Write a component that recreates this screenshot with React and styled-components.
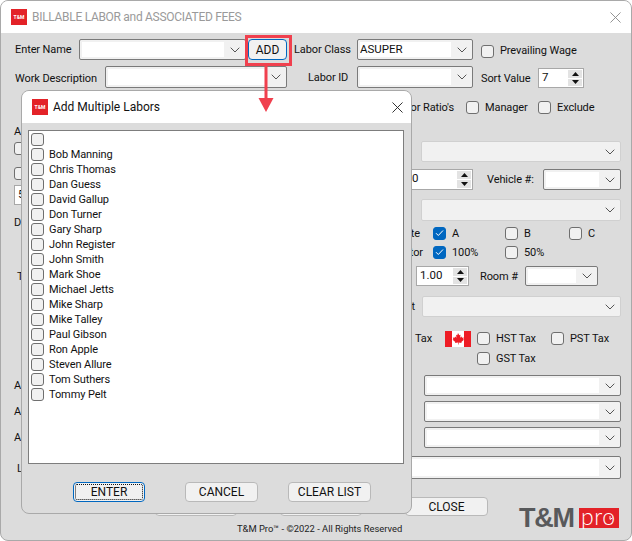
import React from "react";
import styled, { createGlobalStyle } from "styled-components";

const Global = createGlobalStyle`
  html, body { margin: 0; padding: 0; background: #fff; }
  * { box-sizing: border-box; }
  body { font-family: Roboto, "Liberation Sans", Arial, sans-serif; font-size: 11px; letter-spacing: -0.1px; color: #111; }
`;

const Win = styled.div`
  position: relative; width: 632px; height: 541px; overflow: hidden;
  background: #dcdcdc; border: 1px solid #a9a9a9; border-radius: 8px;
`;
const TitleBar = styled.div`
  display: flex; align-items: center; height: ${p => p.$h}px; background: #fff;
  padding: 0 ${p => p.$pr}px 0 ${p => p.$pl}px; flex: none;
`;
const TitleText = styled.div`
  flex: 1; margin-left: ${p => p.$ml}px; color: ${p => p.$color}; font-size: 12px; white-space: nowrap;
  letter-spacing: ${p => p.$ls || 0}px;
`;
const Badge = styled.div`
  width: 16px; height: 16px; background: #e32228; color: #fff; font-size: 5px; font-weight: 700; letter-spacing: 0;
  display: flex; align-items: center; justify-content: center; flex: none;
`;
const Row = styled.div`
  display: flex; align-items: center; height: ${p => p.$h}px; margin-top: ${p => p.$mt || 0}px;
  padding-left: ${p => p.$pl || 0}px; flex: none;
`;
const Label = styled.span`
  display: block; white-space: nowrap; margin-left: ${p => p.$ml || 0}px; margin-top: ${p => p.$mt || 0}px;
  ${p => p.$w ? `width:${p.$w}px; flex:none;` : ""}
  ${p => p.$right ? "text-align:right;" : ""}
  ${p => p.$color ? `color:${p.$color};` : ""}
`;
const ComboBox = styled.div`
  display: flex; align-items: stretch; flex: none; width: ${p => p.$w}px; height: 100%;
  margin-left: ${p => p.$ml || 0}px; padding: 2px 0 2px 2px; border-radius: 2px;
  background: #f1f1f1; border: 1px solid ${p => p.$off ? "#d0d0d0" : "#7a7a7a"};
`;
const ComboField = styled.div`
  flex: 1; background: ${p => p.$off ? "#f1f1f1" : "#fff"}; line-height: 15px; overflow: hidden; font-size: 11.5px; letter-spacing: 0;
`;
const ComboArrow = styled.div`
  width: 21px; flex: none; display: flex; align-items: center; justify-content: center;
`;
const Chevron = () => (
  <svg width="10" height="6" viewBox="0 0 10 6"><path d="M.7.7 5 5 9.3.7" fill="none" stroke="#555" strokeWidth="1" /></svg>
);
const Combo = ({ w, ml, off, children }) => (
  <ComboBox $w={w} $ml={ml} $off={off}>
    <ComboField $off={off}>{children}</ComboField>
    <ComboArrow><Chevron /></ComboArrow>
  </ComboBox>
);
const Box = styled.span`
  display: flex; align-items: center; justify-content: center; flex: none; width: 13px; height: 13px;
  margin-left: ${p => p.$ml || 0}px; margin-top: ${p => p.$mt || 0}px; border-radius: 3px;
  background: ${p => p.$on ? "#0067c0" : "#f1f1f1"}; border: 1px solid ${p => p.$on ? "#0067c0" : "#6f6f6f"};
`;
const Check = ({ on, ml, mt }) => (
  <Box $on={on} $ml={ml} $mt={mt}>
    {on && <svg width="9" height="8" viewBox="0 0 9 8"><path d="M1 4.2 3.3 6.5 8 1.5" fill="none" stroke="#fff" strokeWidth="1" /></svg>}
  </Box>
);
const SpinBox = styled.div`
  display: flex; flex: none; width: ${p => p.$w}px; height: ${p => p.$h ? `${p.$h}px` : "100%"}; margin-left: ${p => p.$ml || 0}px; margin-top: ${p => p.$mt || 0}px;
  background: #fff; border: 1px solid #a8a8a8; padding: 1px 1px 1px 2px;
`;
const SpinValue = styled.div`
  flex: 1; padding-left: ${p => p.$pl || 0}px; line-height: 15px; font-size: 11.5px; letter-spacing: 0;
`;
const SpinCol = styled.div`
  width: 14px; flex: none; display: flex; flex-direction: column; gap: 1px; background: #fff;
`;
const SpinBtn = styled.div`
  flex: 1; background: #e3e3e3; display: flex; align-items: center; justify-content: center;
`;
const Spin = ({ w, ml, pl, h, mt, children }) => (
  <SpinBox $w={w} $ml={ml} $h={h} $mt={mt}>
    <SpinValue $pl={pl}>{children}</SpinValue>
    <SpinCol>
      <SpinBtn><svg width="7" height="4" viewBox="0 0 7 4"><path d="M3.5 0 7 4H0z" fill="#111" /></svg></SpinBtn>
      <SpinBtn><svg width="7" height="4" viewBox="0 0 7 4"><path d="M0 0h7L3.5 4z" fill="#111" /></svg></SpinBtn>
    </SpinCol>
  </SpinBox>
);
const Btn = styled.button`
  flex: none; width: ${p => p.$w}px; height: ${p => p.$h}px; margin-left: ${p => p.$ml || 0}px;
  padding: 0; font: 12px Roboto, "Liberation Sans", Arial, sans-serif; color: #111;
  background: #f1f1f1; border: 1px solid ${p => p.$focus ? "#0067c0" : "#b9b9b9"}; border-radius: 4px;
  ${p => p.$dotted ? "outline: 1px dotted #111; outline-offset: -3px;" : ""}
`;
const Form = styled.div`
  padding-top: 6px;
`;
const Lower = styled.div`
  display: flex; height: 363px;
`;
const LeftCol = styled.div`
  width: 394px; flex: none; display: flex; flex-direction: column; padding-left: 13px;
`;
const RightCol = styled.div`
  flex: 1; display: flex; flex-direction: column;
`;
const Bottom = styled.div`
  display: flex; margin-top: 18px;
`;
const BottomLeft = styled.div`
  width: 518px; flex: none;
`;
const Copy = styled.div`
  margin-left: 236px; margin-top: 7px; font-size: 9.4px; letter-spacing: 0; line-height: 12px; white-space: nowrap; color: #222;
`;
const Logo = styled.div`
  display: flex; align-items: stretch; height: 20px; margin-top: 11px;
`;
const LogoText = styled.span`
  font-family: "Liberation Sans", Arial, sans-serif;
  font-size: 27px; line-height: 20px; font-weight: 700; color: #58595b; letter-spacing: -1.2px; width: 60px; white-space: nowrap;
`;
const LogoPro = styled.div`
  position: relative; width: 40px; background: #e32228; color: #fff; padding-left: 2px;
  font-size: 23px; font-weight: 300; line-height: 16px; font-family: "Lato", sans-serif; letter-spacing: 0.6px;
`;
const ClockHands = styled.svg`
  position: absolute; right: 5px; top: 7px;
`;
const Flag = styled.div`
  width: 26px; height: 16px; flex: none; margin-left: ${p => p.$ml}px;
`;

const Dialog = styled.div`
  position: absolute; left: 20px; top: 89px; width: 391px; height: 424px; display: flex; flex-direction: column;
  background: #dcdcdc; border: 1px solid #a9a9a9; border-radius: 8px; overflow: hidden;
`;
const ListBox = styled.div`
  margin: 7px 0 0 6px; width: 376px; height: 334px; background: #fff; border: 1px solid #7d7d7d;
  padding: 1px 0 0 2px; flex: none;
`;
const ListItem = styled.div`
  display: flex; align-items: center; height: 15px;
`;
const ListName = styled.span`
  margin-left: 5px; white-space: nowrap;
`;
const DialogButtons = styled.div`
  display: flex; margin-top: 18px;
`;
const Marker = styled.svg`
  position: absolute; left: 240px; top: 30px; pointer-events: none;
`;

const names = ["", "Bob Manning", "Chris Thomas", "Dan Guess", "David Gallup", "Don Turner", "Gary Sharp", "John Register", "John Smith", "Mark Shoe", "Michael Jetts", "Mike Sharp", "Mike Talley", "Paul Gibson", "Ron Apple", "Steven Allure", "Tom Suthers", "Tommy Pelt"];

const CloseX = ({ color, size }) => (
  <svg width={size} height={size} viewBox="0 0 12 12"><path d="M.5.5l11 11M11.5.5l-11 11" stroke={color} strokeWidth="1" fill="none" /></svg>
);

export default function App() {
  return (
    <>
      <Global />
      <Win>
        <TitleBar $h={32} $pl={10} $pr={10}>
          <Badge>T&amp;M</Badge>
          <TitleText $ml={5} $color="#9a9a9a" $ls={-0.3}>BILLABLE LABOR and ASSOCIATED FEES</TitleText>
          <CloseX color="#8a8a8a" size={11} />
        </TitleBar>
        <Form>
          <Row $h={21} $pl={14}>
            <Label $w={64}>Enter Name</Label>
            <Combo w={167} />
            <Btn $w={39} $h={21} $ml={2} $focus>ADD</Btn>
            <Label $w={63} $ml={7}>Labor Class</Label>
            <Combo w={116}>ASUPER</Combo>
            <Check ml={8} mt={4} />
            <Label $ml={6} $mt={2}>Prevailing Wage</Label>
          </Row>
          <Row $h={22} $mt={6} $pl={14}>
            <Label $w={90} $mt={2}>Work Description</Label>
            <Combo w={182} />
            <Label $w={49} $ml={21}>Labor ID</Label>
            <Combo w={116} />
            <Label $w={57} $ml={8} $mt={2}>Sort Value</Label>
            <Spin w={46} pl={1} h={20} mt={2}>7</Spin>
          </Row>
          <Row $h={18} $mt={10}>
            <Label $w={453} $right>Labor Ratio's</Label>
            <Check ml={12} />
            <Label $w={53} $ml={6}>Manager</Label>
            <Check />
            <Label $ml={6}>Exclude</Label>
          </Row>
          <Lower>
            <LeftCol>
              <Row $h={14} $mt={8}><Label>A</Label></Row>
              <Row $h={13} $mt={4}><Check /></Row>
              <Row $h={13} $mt={12}><Check /></Row>
              <Row $h={20} $mt={5}><Spin w={60} pl={1}>5</Spin></Row>
              <Row $h={14} $mt={10}><Label>D</Label></Row>
              <Row $h={14} $mt={40} $pl={3}><Label>T</Label></Row>
              <Row $h={14} $mt={95}><Label>A</Label></Row>
              <Row $h={14} $mt={12}><Label>A</Label></Row>
              <Row $h={14} $mt={12}><Label>A</Label></Row>
              <Row $h={14} $mt={17} $pl={3}><Label>L</Label></Row>
            </LeftCol>
            <RightCol>
              <Row $h={21} $mt={25}><Combo off w={200} ml={26} /></Row>
              <Row $h={21} $mt={7}>
                <Spin w={73} ml={5} pl={9}>0</Spin>
                <Label $w={56} $ml={14}>Vehicle #:</Label>
                <Combo w={78} />
              </Row>
              <Row $h={22} $mt={9}>
                <Label $w={17} $right $color="#1a6b3a">l</Label>
                <Combo off w={200} ml={9} />
              </Row>
              <Row $h={14} $mt={5}>
                <Label $w={25} $right>te</Label>
                <Check on ml={13} />
                <Label $w={53} $ml={6}>A</Label>
                <Check />
                <Label $w={45} $ml={6}>B</Label>
                <Check />
                <Label $ml={6}>C</Label>
              </Row>
              <Row $h={14} $mt={5}>
                <Label $w={28} $right>tor</Label>
                <Check on ml={10} />
                <Label $w={53} $ml={6}>100%</Label>
                <Check />
                <Label $ml={6}>50%</Label>
              </Row>
              <Row $h={20} $mt={7}>
                <Spin w={53} ml={21} pl={1}>1.00</Spin>
                <Label $w={45} $ml={11}>Room #</Label>
                <Combo w={73} />
              </Row>
              <Row $h={21} $mt={10}>
                <Label $w={20} $right>t</Label>
                <Combo off w={199} ml={7} />
              </Row>
              <Row $h={17} $mt={13}>
                <Label $w={37} $right>Tax</Label>
                <Flag $ml={13}>
                  <svg width="26" height="16" viewBox="0 0 26 16">
                    <rect width="26" height="16" fill="#fff" />
                    <rect width="7" height="16" fill="#ee1c25" />
                    <rect x="19" width="7" height="16" fill="#ee1c25" />
                    <path d="M13 2l1.3 2.2 1.2-.5-.4 3 1.4-1.1.5 1.1 1.8-.3-.6 1.9.8.5-2.7 2.2.3 1-3-.4V13.5h-.6v-1.9l-3 .4.3-1-2.7-2.2.8-.5-.6-1.9 1.8.3.5-1.1 1.4 1.1-.4-3 1.2.5z" fill="#ee1c25" />
                  </svg>
                </Flag>
                <Check ml={6} />
                <Label $w={55} $ml={6}>HST Tax</Label>
                <Check />
                <Label $ml={6}>PST Tax</Label>
              </Row>
              <Row $h={17} $mt={3}>
                <Check ml={82} />
                <Label $ml={6}>GST Tax</Label>
              </Row>
              <Row $h={21} $mt={8}><Combo w={197} ml={29} /></Row>
              <Row $h={21} $mt={5}><Combo w={197} ml={29} /></Row>
              <Row $h={21} $mt={5}><Combo w={197} ml={29} /></Row>
              <Row $h={23} $mt={8}><Combo w={226} /></Row>
            </RightCol>
          </Lower>
          <Bottom>
            <BottomLeft>
              <Row $h={19}>
                <Btn $w={82} $h={19} $ml={154} />
                <Btn $w={82} $h={19} $ml={43} />
                <Btn $w={83} $h={19} $ml={43}>CLOSE</Btn>
              </Row>
              <Copy>T&amp;M Pro™ - ©2022 - All Rights Reserved</Copy>
            </BottomLeft>
            <Logo>
              <LogoText>T&amp;M</LogoText>
              <LogoPro>
                pro
                <ClockHands width="8" height="8" viewBox="0 0 8 8">
                  <path d="M4 1v3.4L6.5 3" stroke="#fff" strokeWidth="1" fill="none" />
                </ClockHands>
              </LogoPro>
            </Logo>
          </Bottom>
        </Form>

        <Dialog>
          <TitleBar $h={32} $pl={10} $pr={8}>
            <Badge>T&amp;M</Badge>
            <TitleText $ml={5} $color="#111">Add Multiple Labors</TitleText>
            <CloseX color="#222" size={11} />
          </TitleBar>
          <ListBox>
            {names.map((n, i) => (
              <ListItem key={i}>
                <Check />
                {n && <ListName>{n}</ListName>}
              </ListItem>
            ))}
          </ListBox>
          <DialogButtons>
            <Btn $w={72} $h={20} $ml={51} $focus $dotted>ENTER</Btn>
            <Btn $w={73} $h={20} $ml={40}>CANCEL</Btn>
            <Btn $w={83} $h={20} $ml={30}>CLEAR LIST</Btn>
          </DialogButtons>
        </Dialog>

        <Marker width="60" height="85" viewBox="0 0 60 85">
          <rect x="5.5" y="5.5" width="44" height="28" fill="none" stroke="#f0404e" strokeWidth="3" />
          <path d="M25 34v34" stroke="#f0404e" strokeWidth="3" fill="none" />
          <path d="M17.5 67h15L25 81z" fill="#f0404e" />
        </Marker>
      </Win>
    </>
  );
}
